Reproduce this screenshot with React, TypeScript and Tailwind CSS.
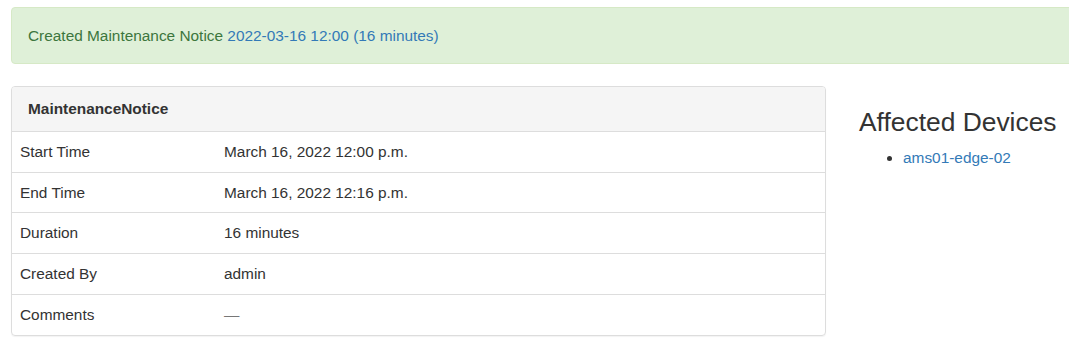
const rows: [string, string][] = [
  ["Start Time", "March 16, 2022 12:00 p.m."],
  ["End Time", "March 16, 2022 12:16 p.m."],
  ["Duration", "16 minutes"],
  ["Created By", "admin"],
  ["Comments", ""],
];

export default function App() {
  return (
    <div className="w-[1069px] h-[349px] overflow-hidden bg-white font-['Liberation_Sans',Arial,sans-serif] text-[15.4px] leading-[22px] text-[#333]">
      <div className="pt-[7px] pl-[11px]">
        <div className="w-[1080px] h-[57px] flex items-center pt-[1px] px-[16px] bg-[#dff0d8] border border-[#d6e9c6] rounded-[4px] text-[#3c763d]">
          <span>
            Created Maintenance Notice{" "}
            <a href="#" className="text-[#337ab7]">2022-03-16 12:00 (16 minutes)</a>
          </span>
        </div>
      </div>

      <div className="flex mt-[22px] pl-[11px]">
        {/* Notice details */}
        <div className="w-[815px] border border-[#ddd] rounded-[4px] overflow-hidden shadow-[0_1px_1px_rgba(0,0,0,0.05)]">
          <div className="h-[45px] flex items-center px-[16px] bg-[#f5f5f5] border-b border-[#ddd] font-bold">
            MaintenanceNotice
          </div>
          {rows.map(([label, value], i) => (
            <div
              key={label}
              className={`flex h-[40.7px] items-center ${i < rows.length - 1 ? "border-b border-[#ddd]" : ""}`}
            >
              <div className="w-[212px] pl-[8px]">{label}</div>
              <div className="flex-1">
                {value ? value : <span className="text-[#777]">—</span>}
              </div>
            </div>
          ))}
        </div>

        {/* Affected devices */}
        <div className="pl-[33px] pt-[22px]">
          <h3 className="text-[26.4px] leading-[29px] text-[#333]">Affected Devices</h3>
          <ul className="list-disc pl-[44px] mt-[10px]">
            <li>
              <a href="#" className="text-[#337ab7]">ams01-edge-02</a>
            </li>
          </ul>
        </div>
      </div>
    </div>
  );
}
